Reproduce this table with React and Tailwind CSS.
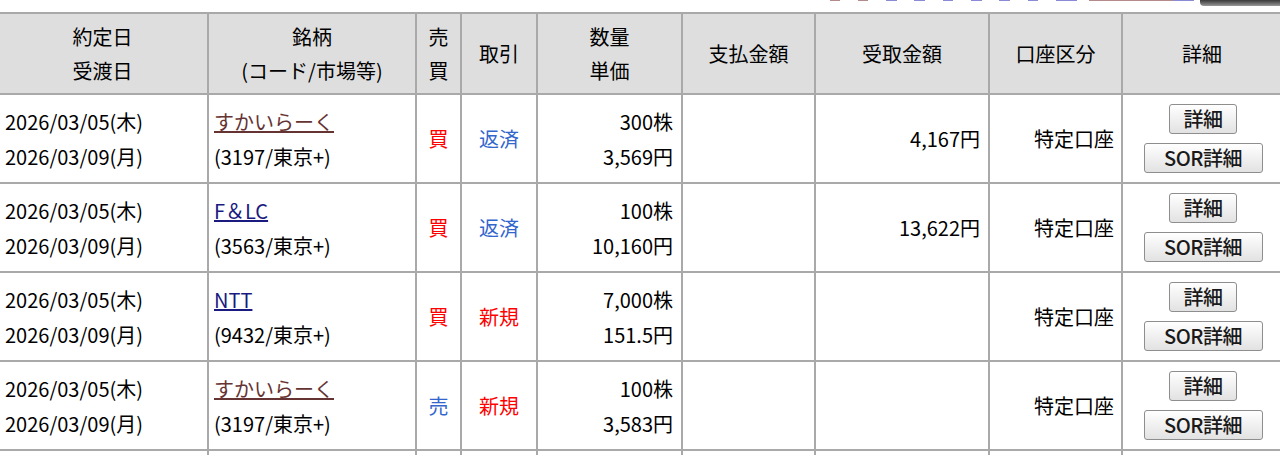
import React from 'react';

const rows = [
  {
    stock: 'すかいらーく', visited: true, code: '(3197/東京+)',
    side: '買', trade: '返済', qty: '300株', price: '3,569円', pay: '', recv: '4,167円',
  },
  {
    stock: 'F＆LC', visited: false, code: '(3563/東京+)',
    side: '買', trade: '返済', qty: '100株', price: '10,160円', pay: '', recv: '13,622円',
  },
  {
    stock: 'NTT', visited: false, code: '(9432/東京+)',
    side: '買', trade: '新規', qty: '7,000株', price: '151.5円', pay: '', recv: '',
  },
  {
    stock: 'すかいらーく', visited: true, code: '(3197/東京+)',
    side: '売', trade: '新規', qty: '100株', price: '3,583円', pay: '', recv: '',
  },
];

const th = 'border-2 border-[#a9a9a9] bg-[#dedede] font-normal text-center align-middle leading-[34px]';
const td = 'border-2 border-[#a9a9a9] align-middle leading-[35px]';

// link underlines from the pager above the table, mostly scrolled out of view
const pager = [
  { w: 'w-[10px]', c: 'bg-[#b58a8a]', ml: 'ml-0' },
  { w: 'w-[10px]', c: 'bg-[#b58a8a]', ml: 'ml-[18px]' },
  { w: 'w-[11px]', c: 'bg-[#8a8ad6]', ml: 'ml-[18px]' },
  { w: 'w-[11px]', c: 'bg-[#8a8ad6]', ml: 'ml-[17px]' },
  { w: 'w-[10px]', c: 'bg-[#8a8ad6]', ml: 'ml-[18px]' },
  { w: 'w-[11px]', c: 'bg-[#8a8ad6]', ml: 'ml-[18px]' },
  { w: 'w-[11px]', c: 'bg-[#8a8ad6]', ml: 'ml-[17px]' },
  { w: 'w-[10px]', c: 'bg-[#8a8ad6]', ml: 'ml-[18px]' },
  { w: 'w-[21px]', c: 'bg-[#8a8ad6]', ml: 'ml-[18px]' },
  { w: 'w-[84px]', c: 'bg-[#b58a8a]', ml: 'ml-[12px]' },
  { w: 'w-[21px]', c: 'bg-[#8a8ad6]', ml: 'ml-0' },
];

const Btn = ({ children, w }) => (
  <button
    className={`${w} h-[30px] rounded-[3px] border border-[#8e8e8e] bg-gradient-to-b from-white to-[#e2e2e2] text-[20px] leading-none tracking-[-0.5px] text-[#1a1a1a] font-medium font-['Noto_Sans_CJK_JP',sans-serif]`}
  >
    {children}
  </button>
);

export default function App() {
  return (
    <div className="w-[1280px] h-[455px] overflow-hidden bg-white text-black text-[20px] font-['Noto_Sans_CJK_JP','Liberation_Sans',sans-serif]">
      <div className="h-[12px] flex items-start pl-[830px]">
        {pager.map((p, i) => (
          <span key={i} className={`h-px ${p.w} ${p.c} ${p.ml}`} />
        ))}
        <span className="ml-[6px] h-[6px] w-[80px] rounded-bl-[4px] bg-gradient-to-b from-[#3a3a3a] to-[#9a9a9a]" />
      </div>

      <table className="table-fixed border-collapse ml-[-4px] w-[1287px]">
        <colgroup>
          <col className="w-[211px]" />
          <col className="w-[208px]" />
          <col className="w-[45px]" />
          <col className="w-[76px]" />
          <col className="w-[145px]" />
          <col className="w-[133px]" />
          <col className="w-[174px]" />
          <col className="w-[133px]" />
          <col />
        </colgroup>
        <thead>
          <tr className="h-[81px]">
            <th className={th}>約定日<br />受渡日</th>
            <th className={th}>銘柄<br />(コード/市場等)</th>
            <th className={th}>売<br />買</th>
            <th className={th}>取引</th>
            <th className={th}>数量<br />単価</th>
            <th className={th}>支払金額</th>
            <th className={th}>受取金額</th>
            <th className={th}>口座区分</th>
            <th className={th}>詳細</th>
          </tr>
        </thead>
        <tbody>
          {rows.map((r, i) => (
            <tr key={i} className="h-[89px]">
              <td className={`${td} pl-[7px]`}>
                2026/03/05(木)<br />2026/03/09(月)
              </td>
              <td className={`${td} pl-[5px]`}>
                <a
                  href="#"
                  className={`underline ${r.visited ? 'text-[#663333]' : 'text-[#1a1a80]'}`}
                >
                  {r.stock}
                </a>
                <br />
                {r.code}
              </td>
              <td className={`${td} text-center ${r.side === '買' ? 'text-[#ff0000]' : 'text-[#3366cc]'}`}>
                {r.side}
              </td>
              <td className={`${td} text-center ${r.trade === '新規' ? 'text-[#ff0000]' : 'text-[#3366cc]'}`}>
                {r.trade}
              </td>
              <td className={`${td} text-right pr-[8px]`}>
                {r.qty}<br />{r.price}
              </td>
              <td className={`${td} text-right pr-[8px]`}>{r.pay}</td>
              <td className={`${td} text-right pr-[8px]`}>{r.recv}</td>
              <td className={`${td} text-right pr-[7px]`}>特定口座</td>
              <td className={`${td} pl-[2px]`}>
                <div className="flex flex-col items-center gap-[9px]">
                  <Btn w="w-[68px]">詳細</Btn>
                  <Btn w="w-[119px]">SOR詳細</Btn>
                </div>
              </td>
            </tr>
          ))}
          {/* next row, scrolled below the fold */}
          <tr className="h-[89px]">
            {Array.from({ length: 9 }).map((_, i) => (
              <td key={i} className={td} />
            ))}
          </tr>
        </tbody>
      </table>
    </div>
  );
}
